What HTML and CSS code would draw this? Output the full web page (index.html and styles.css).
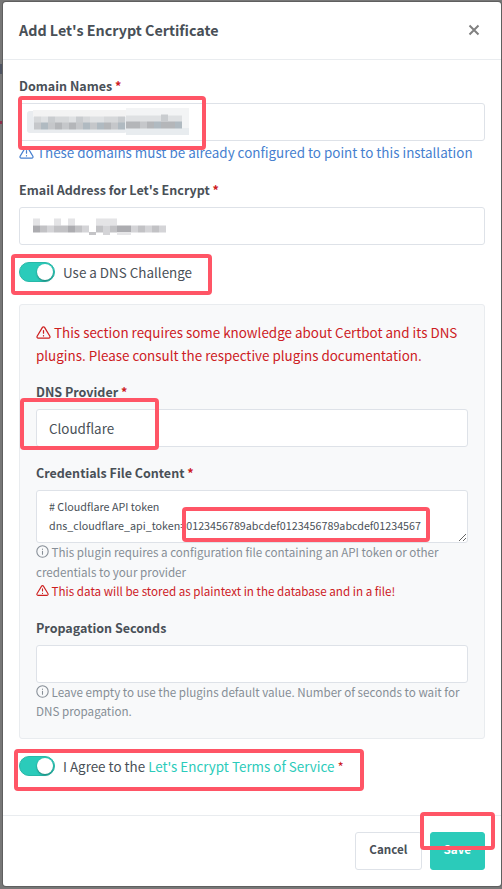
FILE: index.html
```html
<!DOCTYPE html>
<html lang="en">
<head>
    <meta charset="UTF-8">
    <meta name="viewport" content="width=device-width, initial-scale=1.0">
    <title>Add Let's Encrypt Certificate</title>
    <link rel="stylesheet" href="styles.css">
</head>
<body>
    <svg class="sprite" aria-hidden="true">
        <symbol id="icon-alert" viewBox="0 0 24 24">
            <path d="M10.3 3.9 1.8 18a2 2 0 0 0 1.7 3h17a2 2 0 0 0 1.7-3L13.7 3.9a2 2 0 0 0-3.4 0z"/>
            <path d="M12 9v4M12 17v.5"/>
        </symbol>
        <symbol id="icon-info" viewBox="0 0 24 24">
            <circle cx="12" cy="12" r="10.5"/>
            <path d="M12 11.5V17M12 7.5V8"/>
        </symbol>
    </svg>

    <form class="modal" role="dialog" aria-labelledby="modalTitle">
        <div class="modal-header">
            <h1 class="modal-title" id="modalTitle">Add Let's Encrypt Certificate</h1>
            <button type="button" class="close" aria-label="Close">
                <svg viewBox="0 0 12 12"><path d="M1.5 1.5l9 9M10.5 1.5l-9 9"/></svg>
            </button>
        </div>

        <div class="modal-body">
            <div class="form-group">
                <label class="form-label" for="domains">Domain Names <span class="required">*</span></label>
                <div class="field">
                    <input type="text" class="form-control" id="domains">
                    <svg class="masked masked-domain" viewBox="0 0 162 27" aria-hidden="true">
                        <rect x="0" y="3" width="100" height="22" rx="3" fill="#e9ecef"/>
                        <rect x="6" y="2" width="93" height="7" fill="#f3f3f3"/>
                        <rect x="99" y="0" width="63" height="27" fill="#f3f4f5"/>
                        <rect x="99" y="20" width="63" height="7" fill="#e8ecef"/>
                        <g class="blocks">
                            <path stroke="#d6d8da" d="M7 12h7M28 12h7M35 12h7M56 12h7M77 12h7M84 12h7"/>
                            <path stroke="#c9cccf" d="M21 12h7M49 12h7M91 12h7M134 10h7"/>
                            <path stroke="#dfe1e3" d="M14 12h7M42 12h7M63 12h14M99 11h35M141 11h14"/>
                            <path stroke="#c5c7ca" d="M7 18h7M21 18h7M35 18h7M49 18h7M63 18h7M84 18h7M113 17h7"/>
                            <path stroke="#b0bac1" d="M14 18h7M56 18h7M70 18h7M91 18h7M127 17h7M148 17h7"/>
                            <path stroke="#b4b6b9" d="M28 18h7M42 18h7M77 18h7M99 17h14M120 17h7M134 17h14"/>
                        </g>
                    </svg>
                    <span class="mark mark-domains"></span>
                </div>
                <div class="text-blue"><svg class="icon"><use href="#icon-alert"/></svg> These domains must be already configured to point to this installation</div>
            </div>

            <div class="form-group">
                <label class="form-label" for="email">Email Address for Let's Encrypt <span class="required">*</span></label>
                <div class="field">
                    <input type="text" class="form-control" id="email">
                    <svg class="masked masked-email" viewBox="0 0 134 18" aria-hidden="true">
                        <g class="blocks">
                            <path stroke="#e4e4e6" d="M0 4h7M21 4h7M35 4h7M63 4h7M70 4h14"/>
                            <path stroke="#acacb0" d="M0 11h7M35 11h7M84 11h14"/>
                            <path stroke="#c2c2c5" d="M7 11h7M21 11h14M42 11h7M63 11h7M77 11h7M105 11h7M119 11h7"/>
                            <path stroke="#d4d4d7" d="M14 11h7M49 11h7M70 11h7M98 11h7M112 11h7M126 11h7"/>
                        </g>
                        <rect x="56" y="14" width="7" height="3" fill="#c4c4c7"/>
                        <rect x="70" y="14" width="7" height="3" fill="#d4d4d7"/>
                        <rect x="84" y="14" width="14" height="3" fill="#e6e6e8"/>
                    </svg>
                </div>
            </div>

            <div class="switch-row">
                <label class="switch">
                    <input type="checkbox" checked>
                    <span>Use a DNS Challenge</span>
                </label>
                <span class="mark mark-challenge"></span>
            </div>

            <div class="well">
                <p class="notice text-red"><svg class="icon"><use href="#icon-alert"/></svg> This section requires some knowledge about Certbot and its DNS plugins. Please consult the respective plugins documentation.</p>

                <div class="form-group">
                    <label class="form-label" for="provider">DNS Provider <span class="required">*</span></label>
                    <div class="field">
                        <select class="form-control" id="provider">
                            <option>Cloudflare</option>
                        </select>
                        <span class="mark mark-provider"></span>
                    </div>
                </div>

                <div class="form-group">
                    <label class="form-label" for="credentials">Credentials File Content <span class="required">*</span></label>
                    <div class="field">
                        <textarea class="form-control credentials" id="credentials" rows="2" spellcheck="false"># Cloudflare API token
dns_cloudflare_api_token=0123456789abcdef0123456789abcdef01234567</textarea>
                        <span class="mark mark-token"></span>
                    </div>
                    <div class="hint text-muted"><svg class="icon"><use href="#icon-info"/></svg> This plugin requires a configuration file containing an API token or other credentials to your provider</div>
                    <div class="hint text-red"><svg class="icon"><use href="#icon-alert"/></svg> This data will be stored as plaintext in the database and in a file!</div>
                </div>

                <div class="form-group">
                    <label class="form-label" for="propagation">Propagation Seconds</label>
                    <div class="field">
                        <input type="text" class="form-control" id="propagation">
                    </div>
                    <div class="hint text-muted"><svg class="icon"><use href="#icon-info"/></svg> Leave empty to use the plugins default value. Number of seconds to wait for DNS propagation.</div>
                </div>
            </div>

            <div class="switch-row">
                <label class="switch">
                    <input type="checkbox" checked>
                    <span>I Agree to the <a href="#">Let's Encrypt Terms of Service</a> <span class="required">*</span></span>
                </label>
                <span class="mark mark-terms"></span>
            </div>
        </div>

        <div class="modal-footer">
            <button type="button" class="btn btn-secondary">Cancel</button>
            <div class="field">
                <button type="button" class="btn btn-teal">Save</button>
                <span class="mark mark-save"></span>
            </div>
        </div>
    </form>
</body>
</html>
```

FILE: styles.css
```css
* {
    box-sizing: border-box;
}
body {
    margin: 0;
    padding: 2px 1px 3px 3px;
    /* dimmed page behind the modal */
    background: linear-gradient(#777 64px, #4f5462 64px, #4f5462 74px, #777 74px, #777 121px, #8c2f4c 121px, #8c2f4c 124px, #777 124px);
    color: #495057;
    font-family: "Source Sans Pro", "Noto Sans CJK SC", sans-serif;
    font-size: 15px;
    /* x-height of Source Sans, keeps the fallback at the same size */
    font-size-adjust: 0.486;
    line-height: 1.5;
}
.sprite {
    display: none;
}
.modal {
    background-color: #fff;
    border-radius: 3px;
    box-shadow: 0 0 0 1px #5f5f5f;
}
.modal-header {
    display: flex;
    align-items: center;
    justify-content: space-between;
    height: 58px;
    padding: 0 19px 2px 16px;
    border-bottom: 1px solid #e9ecef;
}
.modal-title {
    margin: 0;
    font-size: 16px;
    font-weight: bold;
}
.close {
    display: flex;
    padding: 2px;
    border: none;
    background: none;
    cursor: pointer;
}
.close svg {
    width: 12px;
    height: 12px;
    stroke: #808080;
    stroke-width: 2;
}
.modal-body {
    padding: 16px 16px 38px;
}
.form-group {
    margin-bottom: 16px;
}
.form-label {
    display: block;
    margin-bottom: 8px;
    font-size: 14px;
    font-weight: bold;
    line-height: 19px;
}
.required {
    color: #cd201f;
}
.field {
    position: relative;
    display: flex;
}
.form-control {
    display: block;
    width: 100%;
    height: 38px;
    margin: 0;
    padding: 6px 12px;
    border: 1px solid #dee2e8;
    border-radius: 3px;
    background-color: #fff;
    color: #495057;
    font: inherit;
    font-size-adjust: inherit;
    appearance: none;
}
.credentials {
    height: 53px;
    padding: 6px 12px;
    overflow: hidden;
    font-size: 12px;
    line-height: 19px;
    resize: vertical;
}
.masked {
    position: absolute;
}
.masked-domain {
    top: 5px;
    left: 8px;
    width: 162px;
    height: 27px;
}
.masked-email {
    top: 11px;
    left: 14px;
    width: 134px;
    height: 18px;
}
.blocks {
    stroke-width: 7;
}
.icon {
    width: 15px;
    height: 15px;
    vertical-align: -2px;
    fill: none;
    stroke: currentColor;
    stroke-width: 2;
    stroke-linejoin: round;
    stroke-linecap: round;
}
.hint {
    font-size: 13px;
}
.hint .icon {
    width: 13px;
    height: 13px;
    vertical-align: -1px;
}
.text-blue {
    color: #467fcf;
}
.text-red {
    color: #cd201f;
}
.text-muted {
    color: #868e96;
}
.switch-row {
    position: relative;
    display: flex;
}
.switch {
    display: flex;
    align-items: center;
    gap: 8px;
}
.switch input {
    width: 36px;
    height: 20px;
    margin: 0;
    padding: 1px;
    border: 1px solid #28b8a8;
    border-radius: 10px;
    background-color: #2bcbba;
    appearance: none;
}
.switch input::before {
    content: "";
    display: block;
    width: 16px;
    height: 16px;
    margin-left: 16px;
    border-radius: 50%;
    background-color: #fff;
    box-shadow: 0 1px 2px rgba(0, 0, 0, 0.4);
}
.well {
    margin: 21px 0 16px;
    padding: 16px 16px 0;
    border: 1px solid #e9ecef;
    border-radius: 3px;
    background-color: #f8f9fa;
}
.notice {
    margin: 0 0 16px;
}
a {
    color: #2bcbba;
    text-decoration: none;
}
.modal-footer {
    display: flex;
    justify-content: flex-end;
    gap: 8px;
    padding: 16px;
    border-top: 1px solid #e9ecef;
}
.btn {
    height: 38px;
    padding: 0 13px 2px;
    border: 1px solid #dee2e8;
    border-radius: 3px;
    font: inherit;
    font-size: 13px;
    font-size-adjust: inherit;
    font-weight: bold;
    cursor: pointer;
}
.btn-secondary {
    background-color: #fff;
    color: #495057;
}
.btn-teal {
    border-color: #2bcbba;
    background-color: #2bcbba;
    color: #fff;
}
/* Red callout boxes laid over the form */
.mark {
    position: absolute;
    border: 4px solid #ff5566;
    border-radius: 4px;
    pointer-events: none;
}
.mark-domains {
    top: -7px;
    left: -1px;
    width: 188px;
    height: 54px;
}
.mark-challenge {
    top: -7px;
    left: -8px;
    width: 201px;
    height: 41px;
}
.mark-provider {
    top: -11px;
    left: -16px;
    width: 139px;
    height: 52px;
}
.mark-token {
    top: 17px;
    left: 146px;
    width: 248px;
    height: 35px;
}
.mark-terms {
    top: -6px;
    left: -5px;
    width: 350px;
    height: 42px;
}
.mark-save {
    top: -20px;
    right: -10px;
    width: 75px;
    height: 38px;
}
```
